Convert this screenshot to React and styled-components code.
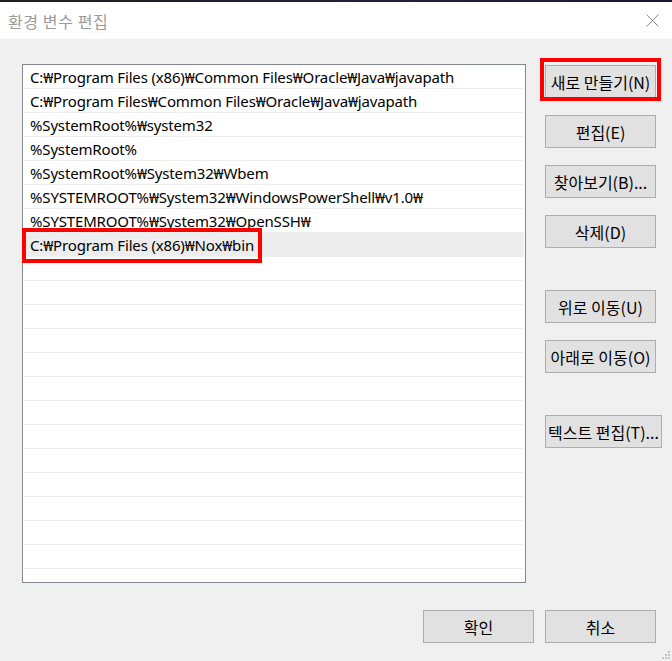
import React from 'react';
import styled, { createGlobalStyle } from 'styled-components';

const GlobalStyle = createGlobalStyle`
  html, body {
    margin: 0;
    padding: 0;
    background: #f0f0f0;
  }
  * {
    box-sizing: border-box;
  }
`;

const Window = styled.div`
  width: 672px;
  height: 661px;
  display: flex;
  flex-direction: column;
  background: #f0f0f0;
  font-family: "Noto Sans", "Noto Sans CJK KR", sans-serif;
  overflow: hidden;
  position: relative;
`;

const TopEdge = styled.div`
  height: 2px;
  background: linear-gradient(90deg, #1e1e24, #24203a 60%, #1a1830);
`;

const TitleBar = styled.div`
  height: 37px;
  background: #fff;
  display: flex;
  align-items: center;
  justify-content: space-between;
  padding: 0 13px 0 8px;
`;

const Title = styled.span`
  font-family: "Noto Sans CJK KR", sans-serif;
  font-size: 16px;
  color: #9a9a9a;
  letter-spacing: 0.6px;
`;

const Body = styled.div`
  flex: 1;
  display: flex;
  flex-direction: column;
  padding: 25px 16px 0 22px;
`;

const Main = styled.div`
  display: flex;
  align-items: flex-start;
  gap: 19px;
`;

const List = styled.div`
  flex-shrink: 0;
  width: 504px;
  height: 519px;
  background: #fff;
  border: 1px solid #828790;
  padding: 0 1px;
  display: flex;
  flex-direction: column;
`;

const Row = styled.div`
  position: relative;
  z-index: ${(p) => (p.$selected ? 1 : 'auto')};
  flex-shrink: 0;
  height: 24px;
  border-bottom: 1px solid #efefef;
  background: ${(p) => (p.$selected ? '#ededed' : '#fff')};
  padding: 2px 0 0 6px;
  font-size: 15px;
  line-height: 20px;
  letter-spacing: -0.16px;
  color: #000;
  white-space: nowrap;
`;

const Filler = styled.div`
  flex: 1;
`;

const Mark = styled.div`
  position: absolute;
  left: -2px;
  top: -5px;
  width: 240px;
  height: 35px;
  border: 4px solid #f00;
  pointer-events: none;
`;

const ButtonColumn = styled.div`
  flex: 1;
  display: flex;
  flex-direction: column;
  align-items: flex-start;
  gap: 17px;
  padding-top: 1px;
`;

const Button = styled.button`
  position: relative;
  flex-shrink: 0;
  min-width: 111px;
  height: 33px;
  margin-top: ${(p) => (p.$gap ? '25px' : '0')};
  padding: 0 2px;
  background: #e1e1e1;
  border: 1px solid #adadad;
  border-radius: 0;
  font-family: "Noto Sans CJK KR", sans-serif;
  font-size: 16px;
  color: #000;
  white-space: nowrap;
  cursor: default;

  ${(p) =>
    p.$marked &&
    `
    &::after {
      content: '';
      position: absolute;
      top: -8px;
      left: -6px;
      right: -6px;
      bottom: -4px;
      border: 4px solid #f00;
    }
  `}
`;

const Footer = styled.div`
  display: flex;
  justify-content: flex-end;
  gap: 11px;
  margin-top: 27px;
`;

const Grip = styled.svg`
  position: absolute;
  right: 1px;
  bottom: 1px;
`;

const paths = [
  'C:₩Program Files (x86)₩Common Files₩Oracle₩Java₩javapath',
  'C:₩Program Files₩Common Files₩Oracle₩Java₩javapath',
  '%SystemRoot%₩system32',
  '%SystemRoot%',
  '%SystemRoot%₩System32₩Wbem',
  '%SYSTEMROOT%₩System32₩WindowsPowerShell₩v1.0₩',
  '%SYSTEMROOT%₩System32₩OpenSSH₩',
  'C:₩Program Files (x86)₩Nox₩bin',
];

const rows = [...paths, ...Array(13).fill('')];

export default function App() {
  return (
    <>
      <GlobalStyle />
      <Window>
        <TopEdge />
        <TitleBar>
          <Title>환경 변수 편집</Title>
          <svg width="13" height="13" viewBox="0 0 13 13">
            <path d="M0.5 0.5 L12.5 12.5 M12.5 0.5 L0.5 12.5" stroke="#8a8a8a" strokeWidth="1" fill="none" />
          </svg>
        </TitleBar>
        <Body>
          <Main>
            <List>
              {rows.map((text, i) => (
                <Row key={i} $selected={i === 7}>
                  {text}
                  {i === 7 && <Mark />}
                </Row>
              ))}
              <Filler />
            </List>
            <ButtonColumn>
              <Button $marked>새로 만들기(N)</Button>
              <Button>편집(E)</Button>
              <Button>찾아보기(B)...</Button>
              <Button>삭제(D)</Button>
              <Button $gap>위로 이동(U)</Button>
              <Button>아래로 이동(O)</Button>
              <Button $gap>텍스트 편집(T)...</Button>
            </ButtonColumn>
          </Main>
          <Footer>
            <Button>확인</Button>
            <Button>취소</Button>
          </Footer>
        </Body>
        <Grip width="10" height="10" viewBox="0 0 10 10">
          <rect x="7" y="1" width="2" height="2" fill="#c4c4c4" />
          <rect x="4" y="4" width="2" height="2" fill="#c4c4c4" />
          <rect x="7" y="4" width="2" height="2" fill="#c4c4c4" />
          <rect x="1" y="7" width="2" height="2" fill="#c4c4c4" />
          <rect x="4" y="7" width="2" height="2" fill="#c4c4c4" />
          <rect x="7" y="7" width="2" height="2" fill="#c4c4c4" />
        </Grip>
      </Window>
    </>
  );
}
